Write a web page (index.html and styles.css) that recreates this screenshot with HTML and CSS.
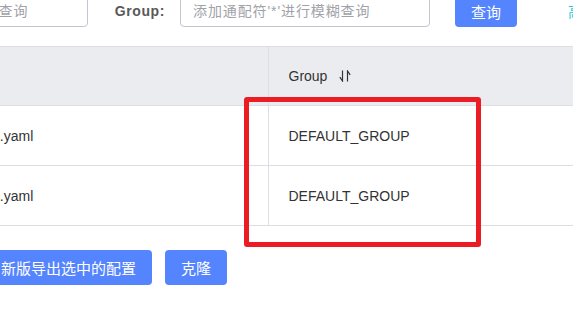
FILE: index.html
```html
<!DOCTYPE html>
<html lang="zh-CN">
<head>
    <meta charset="UTF-8">
    <title>配置列表</title>
    <link rel="stylesheet" href="styles.css">
</head>
<body>
    <div class="page">
        <!-- Search bar -->
        <div class="toolbar">
            <div class="field">
                <label class="field-label">Data ID:</label>
                <input class="field-input" placeholder="添加通配符'*'进行模糊查询">
            </div>
            <div class="field">
                <label class="field-label">Group:</label>
                <input class="field-input" placeholder="添加通配符'*'进行模糊查询">
            </div>
            <button class="btn">查询</button>
            <a class="link-advanced">高级查询</a>
        </div>

        <!-- Config table -->
        <table class="config-table">
            <colgroup>
                <col class="col-check">
                <col class="col-dataid">
                <col class="col-group">
                <col class="col-app">
            </colgroup>
            <thead>
                <tr>
                    <th class="cell-divider"></th>
                    <th class="cell-divider">Data Id</th>
                    <th class="cell-divider">
                        <span class="sort-title">Group
                            <svg class="sort-icon" width="13" height="12" viewBox="0 0 13 12">
                                <path d="M3.5 0.5 V11 L0.8 7.2" />
                                <path d="M8.5 11.5 V1 L11.2 4.8" />
                            </svg>
                        </span>
                    </th>
                    <th>归属应用</th>
                </tr>
            </thead>
            <tbody>
                <tr>
                    <td class="cell-divider"></td>
                    <td class="cell-divider">cloud-gateway-application-1.yaml</td>
                    <td class="cell-divider">DEFAULT_GROUP</td>
                    <td></td>
                </tr>
                <tr>
                    <td class="cell-divider"></td>
                    <td class="cell-divider">cloud-gateway-application-2.yaml</td>
                    <td class="cell-divider">DEFAULT_GROUP</td>
                    <td></td>
                </tr>
            </tbody>
        </table>

        <!-- Batch actions -->
        <div class="actions">
            <button class="btn">删除</button>
            <button class="btn">导出选中的配置</button>
            <button class="btn">新版导出选中的配置</button>
            <button class="btn">克隆</button>
        </div>
    </div>

    <!-- annotation -->
    <div class="highlight-box"></div>
</body>
</html>
```

FILE: styles.css
```css
body {
    margin: 0;
    width: 573px;
    height: 314px;
    overflow: hidden;
    background: #fff;
    font-family: "Liberation Sans", "Noto Sans CJK SC", sans-serif;
    font-size: 14px;
    color: #333;
    position: relative;
}

.page {
    margin-left: -240px;
    width: 1200px;
    padding-top: 1px;
}

.toolbar {
    display: flex;
    align-items: center;
    gap: 25px;
    padding-left: 11px;
    margin-top: -6px;
    height: 32px;
}
.field {
    display: flex;
    align-items: center;
}
.field-label {
    width: 67px;
    box-sizing: border-box;
    padding-right: 15px;
    text-align: right;
    white-space: nowrap;
    font-weight: bold;
    font-size: 14px;
    letter-spacing: 0.6px;
    color: #595959;
}
.field-input {
    width: 250px;
    height: 32px;
    box-sizing: border-box;
    padding: 0 12px;
    border: 1px solid #c4c6cf;
    border-radius: 4px;
    font-family: inherit;
    font-size: 14px;
    color: #333;
    outline: none;
}
.field-input::placeholder {
    color: #a0a2a8;
    letter-spacing: 0.9px;
}

.btn {
    height: 32px;
    padding: 0 16px;
    border: none;
    border-radius: 4px;
    background-color: #5584ff;
    color: #fff;
    font-family: inherit;
    font-size: 15px;
    cursor: pointer;
}

.link-advanced {
    margin-left: 26px;
    color: #1dc6dc;
    font-size: 14px;
    white-space: nowrap;
}

.config-table {
    margin-top: 19px;
    border-collapse: collapse;
    table-layout: fixed;
    width: 1100px;
    border-top: 1px solid #dcdee3;
}
.col-check { width: 45px; }
.col-dataid { width: 463px; }
.col-group { width: 320px; }

.config-table th,
.config-table td {
    padding: 0 20px;
    text-align: left;
    white-space: nowrap;
    border-bottom: 1px solid #dcdee3;
}
.config-table th {
    height: 58px;
    background-color: #ebecf0;
    font-weight: normal;
    color: #333;
}
.config-table td {
    height: 59px;
}
.config-table .cell-divider {
    border-right: 1px solid #dcdee3;
}

.sort-title {
    display: inline-flex;
    align-items: center;
}
.sort-icon {
    margin-left: 12px;
    fill: none;
    stroke: #333;
    stroke-width: 1.2;
}

.actions {
    display: flex;
    gap: 13px;
    margin-top: 24px;
}
.actions .btn {
    height: 35px;
}

.highlight-box {
    position: absolute;
    left: 244px;
    top: 97px;
    width: 237px;
    height: 150px;
    box-sizing: border-box;
    border: 5px solid #ec1c24;
    border-radius: 3px;
}
```
